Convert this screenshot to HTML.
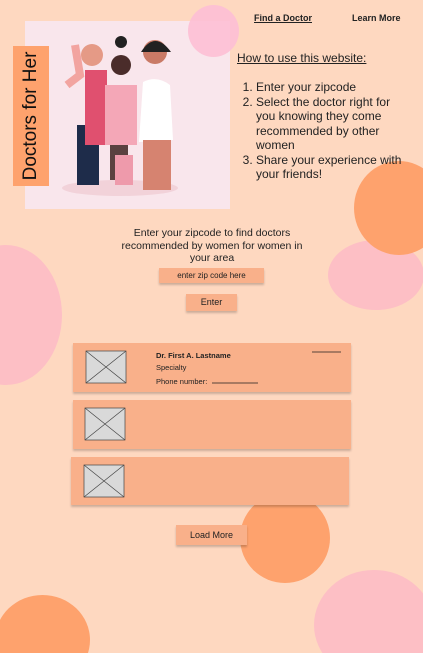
<!DOCTYPE html><html><head><style>
html,body{margin:0;width:423px;height:653px;overflow:hidden}
#w{position:relative;width:423px;height:653px;overflow:hidden;background:#fed8c0;font-family:"Liberation Sans",sans-serif;color:#222}
.a{position:absolute}
.c{position:absolute;border-radius:50%}
.card{position:absolute;background:#f9b08a;box-shadow:0 2px 2px rgba(0,0,0,.2)}
.btn{position:absolute;background:#f9b08a;box-shadow:0 2px 2px rgba(0,0,0,.2);font-size:9px;text-align:center}
</style></head><body><div id="w">
<div class="c" style="left:-50px;top:245px;width:112px;height:140px;background:#fdbfc5"></div>
<div class="c" style="left:328px;top:240px;width:96px;height:70px;background:#fdbfc5"></div>
<div class="c" style="left:354px;top:161px;width:90px;height:94px;background:#fea26d"></div>
<div class="c" style="left:240px;top:493px;width:90px;height:90px;background:#fea26d"></div>
<div class="c" style="left:314px;top:570px;width:120px;height:110px;background:#fdbfc5"></div>
<div class="c" style="left:-5px;top:595px;width:95px;height:90px;background:#fea26d"></div>
<div class="a" style="left:25px;top:21px;width:205px;height:188px;background:#f9e6ec"></div>
<div class="c" style="left:188px;top:5px;width:51px;height:52px;background:#fdbfd5;opacity:.9"></div>
<svg class="a" style="left:55px;top:30px" width="130" height="170">
<ellipse cx="65" cy="158" rx="58" ry="8" fill="#f2d2d9"/>
<rect x="22" y="95" width="22" height="60" fill="#1e2c4a"/><rect x="30" y="40" width="22" height="75" fill="#e0506f"/>
<circle cx="37" cy="25" r="11" fill="#e59a86"/><path d="M12 55 L25 45 L20 15" stroke="#f2a4a0" stroke-width="8" fill="none"/>
<rect x="55" y="60" width="18" height="90" fill="#5b4140"/><rect x="50" y="55" width="32" height="60" fill="#f4a7b7"/>
<circle cx="66" cy="35" r="10" fill="#4a2c2a"/><circle cx="66" cy="12" r="6" fill="#222"/>
<rect x="60" y="125" width="18" height="30" fill="#ee9aab"/>
<path d="M88 52 Q102 45 115 55 L118 110 L84 112 Z" fill="#fff"/><rect x="88" y="110" width="28" height="50" fill="#d68370"/>
<circle cx="100" cy="22" r="12" fill="#c97a66"/><path d="M86 22 Q100 0 116 22" fill="#222"/>
</svg>
<div class="a" style="left:13px;top:46px;width:36px;height:140px;background:#fea26d"></div>
<div class="a" style="left:31px;top:116px;transform:translate(-50%,-50%) rotate(-90deg);font-size:19px;white-space:nowrap;color:#111">Doctors for Her</div>
<div class="a" style="left:254px;top:13px;font-size:9px;font-weight:bold;text-decoration:underline">Find a Doctor</div>
<div class="a" style="left:352px;top:13px;font-size:9px;font-weight:bold">Learn More</div>
<div class="a" style="left:237px;top:51px;font-size:12px;text-decoration:underline">How to use this website:</div>
<ol class="a" style="left:237px;top:80px;margin:0;padding-left:19px;width:150px;font-size:12px;line-height:14.5px">
<li>Enter your zipcode</li><li>Select the doctor right for you knowing they come recommended by other women</li><li>Share your experience with your friends!</li></ol>
<div class="a" style="left:112px;top:227px;width:200px;text-align:center;font-size:10.5px;line-height:12.5px">Enter your zipcode to find doctors recommended by women for women in your area</div>
<div class="btn" style="left:159px;top:268px;width:105px;height:15px;line-height:15px;font-size:8px">enter zip code here</div>
<div class="btn" style="left:186px;top:294px;width:51px;height:17px;line-height:17px">Enter</div>
<div class="card" style="left:73px;top:343px;width:278px;height:49px"></div>
<div class="card" style="left:73px;top:400px;width:278px;height:49px"></div>
<div class="card" style="left:71px;top:457px;width:278px;height:48px"></div>
<svg class="a" style="left:0;top:0" width="423" height="653" stroke="#444" stroke-width=".7">
<g fill="#d9d9d9"><rect x="86" y="351" width="40" height="32"/><rect x="85" y="408" width="40" height="32"/><rect x="84" y="465" width="40" height="32"/></g>
<path d="M86 351L126 383M126 351L86 383M85 408L125 440M125 408L85 440M84 465L124 497M124 465L84 497"/>
<path d="M312 352H341M212 383H258" stroke="#222"/>
</svg>
<div class="a" style="left:156px;top:351px;font-size:7.5px;font-weight:bold">Dr. First A. Lastname</div>
<div class="a" style="left:156px;top:363px;font-size:7.5px">Specialty</div>
<div class="a" style="left:156px;top:377px;font-size:7.5px">Phone number:</div>
<div class="btn" style="left:176px;top:525px;width:71px;height:20px;line-height:20px">Load More</div>
</div></body></html>
